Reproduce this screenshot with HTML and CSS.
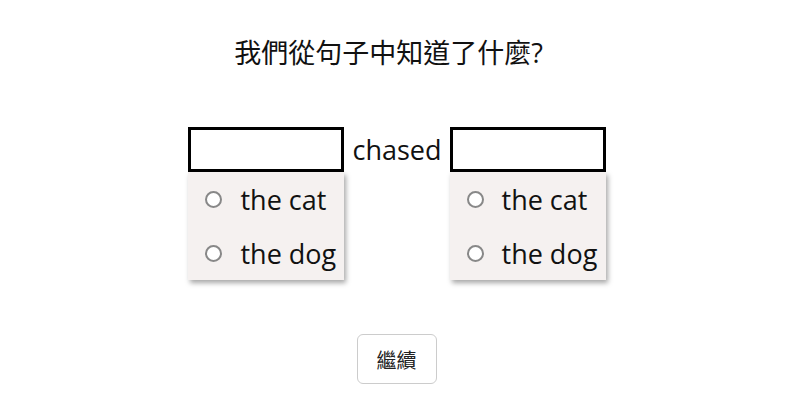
FILE: index.html
```html
<!DOCTYPE html>
<html lang="zh-Hant">
<head>
<meta charset="utf-8">
<link rel="stylesheet" href="styles.css">
</head>
<body>
<main class="page">
  <h1 class="title">我們從句子中知道了什麼?</h1>
  <div class="sentence">
    <div class="blank">
      <div class="box"></div>
      <ul class="menu">
        <li class="option"><span class="radio"></span><span>the cat</span></li>
        <li class="option"><span class="radio"></span><span>the dog</span></li>
      </ul>
    </div>
    <span class="word">chased</span>
    <div class="blank">
      <div class="box"></div>
      <ul class="menu">
        <li class="option"><span class="radio"></span><span>the cat</span></li>
        <li class="option"><span class="radio"></span><span>the dog</span></li>
      </ul>
    </div>
  </div>
  <div class="actions">
    <button class="continue" type="button">繼續</button>
  </div>
</main>
</body>
</html>
```
FILE: styles.css
```css
* { box-sizing: border-box; }
html, body {
  margin: 0;
  padding: 0;
  background: #fff;
}
body {
  font-family: "Open Sans", "Noto Sans CJK TC", sans-serif;
  color: #111;
}
.page {
  display: flex;
  flex-direction: column;
  align-items: center;
  padding-top: 34px;
}
.title {
  margin: 0;
  padding-right: 16px;
  font-weight: 400;
  font-size: 27px;
  line-height: 38px;
  color: #111;
}
.sentence {
  display: flex;
  align-items: center;
  gap: 8px;
  margin-top: 55px;
  padding-left: 1px;
}
.blank {
  position: relative;
  width: 156px;
}
.box {
  height: 45px;
  border: 3px solid #000;
  background: #fff;
}
.word {
  font-size: 27px;
  line-height: 44px;
}
.menu {
  position: absolute;
  top: 45px;
  left: 0;
  width: 156px;
  margin: 0;
  padding: 0;
  list-style: none;
  background: #f5f1f0;
  box-shadow: 2px 3px 5px rgba(0,0,0,0.35);
}
.option {
  display: flex;
  align-items: center;
  height: 54px;
  padding-left: 17px;
  font-size: 27px;
  white-space: nowrap;
}
.radio {
  width: 17px;
  height: 17px;
  border: 2px solid #888;
  border-radius: 50%;
  background: #fff;
  margin-right: 18px;
  flex: none;
}
.actions {
  margin-top: 162px;
}
.continue {
  font-family: "Open Sans", "Noto Sans CJK TC", sans-serif;
  font-size: 20px;
  color: #222;
  background: #fff;
  border: 1px solid #ccc;
  border-radius: 6px;
  height: 50px;
  width: 80px;
  padding: 0;
}
```
